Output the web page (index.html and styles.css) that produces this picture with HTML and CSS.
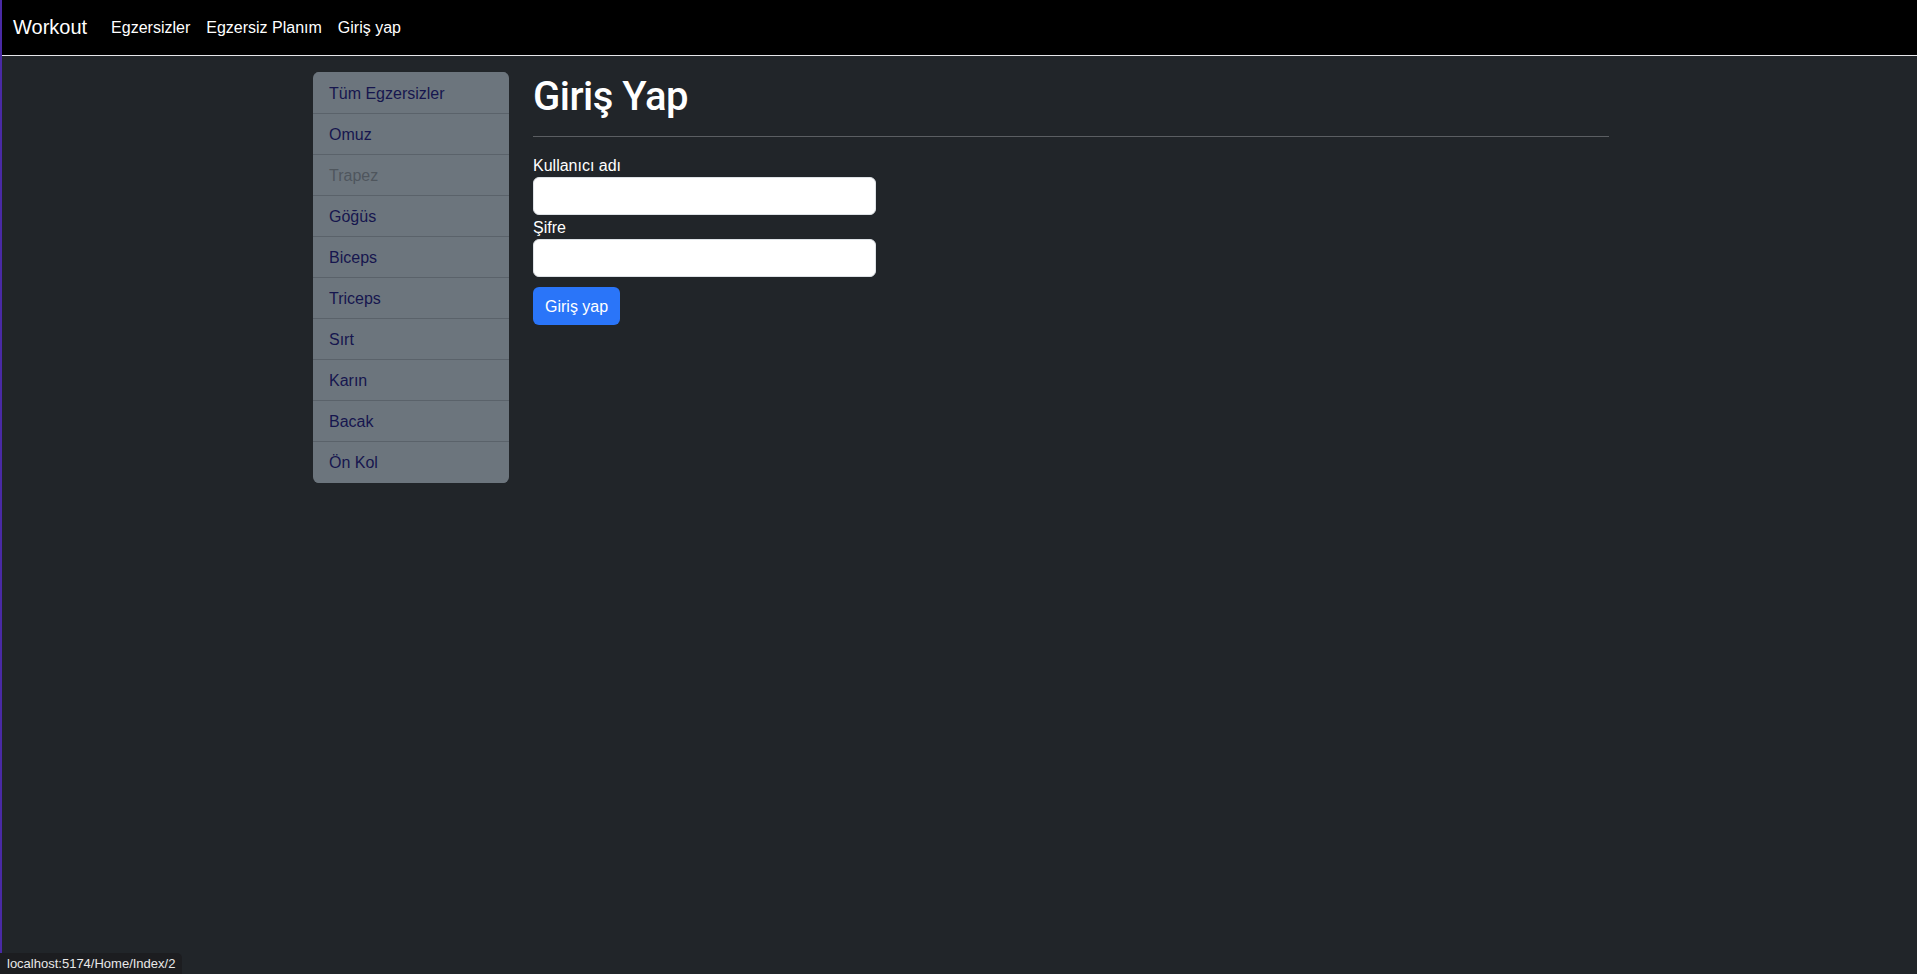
FILE: index.html
```html
<!DOCTYPE html>
<html lang="tr">
<head>
<meta charset="utf-8">
<title>Workout</title>
<link rel="stylesheet" href="styles.css">
</head>
<body>
<header class="navbar">
  <a class="brand" href="#">Workout</a>
  <nav class="nav">
    <a class="nav-link" href="#">Egzersizler</a>
    <a class="nav-link" href="#">Egzersiz Planım</a>
    <a class="nav-link" href="#">Giriş yap</a>
  </nav>
</header>
<div class="container">
  <aside class="list-group">
    <a class="list-item" href="#">Tüm Egzersizler</a>
    <a class="list-item" href="#">Omuz</a>
    <a class="list-item disabled" href="#">Trapez</a>
    <a class="list-item" href="#">Göğüs</a>
    <a class="list-item" href="#">Biceps</a>
    <a class="list-item" href="#">Triceps</a>
    <a class="list-item" href="#">Sırt</a>
    <a class="list-item" href="#">Karın</a>
    <a class="list-item" href="#">Bacak</a>
    <a class="list-item" href="#">Ön Kol</a>
  </aside>
  <main class="main">
    <h1 class="title">Giriş Yap</h1>
    <hr class="divider">
    <form class="login-form">
      <label class="form-label" for="user">Kullanıcı adı</label>
      <input class="form-control" id="user" type="text">
      <label class="form-label" for="pass">Şifre</label>
      <input class="form-control" id="pass" type="password">
      <button class="btn-primary" type="button">Giriş yap</button>
    </form>
  </main>
</div>
<div class="status-bubble">localhost:5174/Home/Index/2</div>
</body>
</html>
```

FILE: styles.css
```css
* { box-sizing: border-box; }

html, body {
  background: #212529;
}

body {
  margin: 0;
  min-height: 100vh;
  border-left: 2px solid #4a2aa5;
  font-family: "Liberation Sans", Helvetica, Arial, sans-serif;
  font-size: 16px;
  line-height: 1.5;
  color: #fff;
}

a { text-decoration: none; }

.navbar {
  display: flex;
  align-items: center;
  height: 56px;
  padding: 0 11px;
  background: #000;
  border-bottom: 1px solid #e6e6ea;
}

.brand {
  font-size: 20px;
  line-height: 30px;
  color: #fff;
  margin-right: 16px;
  margin-top: -2px;
}

.nav {
  display: flex;
}

.nav-link {
  color: #fff;
  padding: 0 8px;
  line-height: 24px;
}

.container {
  display: grid;
  grid-template-columns: 196px 1076px;
  column-gap: 24px;
  width: 1296px;
  margin: 16px 0 0 311px;
  align-items: start;
}

.list-group {
  display: flex;
  flex-direction: column;
  background: #6c757d;
  border-radius: 6px;
  overflow: hidden;
}

.list-item {
  display: block;
  padding: 9px 16px 7px;
  line-height: 24px;
  color: #16164e;
  border-top: 1px solid #5a626a;
}

.list-item:first-child {
  border-top: 1px solid #6c757d;
}

.list-item:last-child {
  border-bottom: 1px solid #6c757d;
}

.list-item.disabled {
  color: #4f565d;
}

.main {
  min-width: 0;
}

.title {
  margin: 0 0 8px;
  padding-top: 1px;
  height: 48px;
  font-family: Roboto, "Liberation Sans", Arial, sans-serif;
  font-size: 40px;
  font-weight: 500;
  line-height: 48px;
  letter-spacing: -0.5px;
  color: #fff;
}

.divider {
  margin: 16px 0;
  border: 0;
  border-top: 1px solid #5b5e62;
}

.login-form {
  width: 343px;
  display: flex;
  flex-direction: column;
  align-items: flex-start;
}

.form-label {
  display: block;
  height: 24px;
  padding-top: 1px;
  line-height: 24px;
  color: #fff;
}

.form-control {
  display: block;
  width: 100%;
  height: 38px;
  padding: 6px 12px;
  font: inherit;
  background: #fff;
  border: 1px solid #dee2e6;
  border-radius: 6px;
}

.btn-primary {
  margin-top: 10px;
  height: 38px;
  padding: 1px 12px 0;
  font: inherit;
  color: #fff;
  background: #2a75f9;
  border: 0;
  border-radius: 6px;
}

.status-bubble {
  position: fixed;
  left: 0;
  bottom: 0;
  height: 21px;
  padding: 0 7px;
  font-size: 13px;
  line-height: 21px;
  color: #e8e8e8;
  background: #1c1d20;
  border-top-right-radius: 5px;
}
```
